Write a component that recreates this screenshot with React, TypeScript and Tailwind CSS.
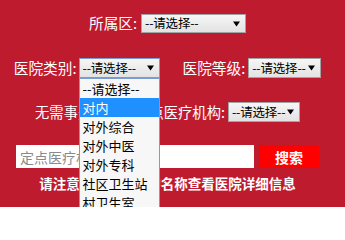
import React from "react";

const font = { fontFamily: '"Noto Sans CJK SC", "Noto Sans", sans-serif' };

function Caret() {
  return (
    <svg width="7" height="6" viewBox="0 0 7 6" className="shrink-0">
      <path d="M0 0.5 H7 L3.5 5.5 Z" fill="#000" />
    </svg>
  );
}

interface SelectProps {
  width: string;
  height: string;
  focused?: boolean;
}

function FakeSelect({ width, height, focused }: SelectProps) {
  return (
    <div
      className={`${width} ${height} flex items-center justify-between gap-[2px] overflow-hidden border pl-[3px] pr-[5px] bg-gradient-to-b from-[#f6f6f6] to-[#e3e3e3] ${
        focused ? "border-[#7b9bd3]" : "border-[#a3a3a3]"
      }`}
    >
      <span className="whitespace-nowrap text-[12.5px] leading-none tracking-[-0.2px] text-black">--请选择--</span>
      <Caret />
    </div>
  );
}

const options = ["--请选择--", "对内", "对外综合", "对外中医", "对外专科", "社区卫生站", "村卫生室"];

export default function App() {
  return (
    <div style={font} className="w-[345px] bg-white">
      <div className="bg-[#bf1b2f] w-[345px] h-[207px]">
        <div className="w-[335px] flex flex-col items-center pt-[14px]">
          {/* 所属区 */}
          <div className="flex items-center h-[19px]">
            <span className="whitespace-nowrap text-[14.67px] leading-none text-white">所属区:</span>
            <div className="ml-[4px]">
              <FakeSelect width="w-[105px]" height="h-[19px]" />
            </div>
          </div>

          {/* 医院类别 / 医院等级 */}
          <div className="flex items-center h-[20px] mt-[25px]">
            <span className="whitespace-nowrap text-[14.67px] leading-none text-white">医院类别:</span>
            <div className="relative ml-[2px] z-10">
              <FakeSelect width="w-[81px]" height="h-[20px]" focused />
              <div className="absolute left-0 top-full w-[81px] border border-[#7b9bd3] bg-[#f7f7f7]">
                {options.map((o, i) => (
                  <div
                    key={o}
                    className={`h-[19px] flex items-center pl-[3px] whitespace-nowrap text-[13px] leading-none ${
                      i === 1 ? "bg-[#1e90ff] text-white" : "text-black"
                    }`}
                  >
                    {o}
                  </div>
                ))}
              </div>
            </div>
            <span className="ml-[23px] whitespace-nowrap text-[14.67px] leading-none text-white">医院等级:</span>
            <div className="ml-[3px]">
              <FakeSelect width="w-[73px]" height="h-[20px]" />
            </div>
          </div>

          {/* 医疗机构 */}
          <div className="flex items-center h-[20px] mt-[24px]">
            <span className="whitespace-nowrap text-[14.3px] leading-none text-white">无需事先备案的定点医疗机构:</span>
            <div className="ml-[3px]">
              <FakeSelect width="w-[72px]" height="h-[20px]" />
            </div>
          </div>

          {/* 搜索 */}
          <div className="flex items-center gap-[5px] h-[23px] mt-[23px]">
            <div className="w-[238px] h-[23px] bg-white flex items-center pl-[4px]">
              <span className="whitespace-nowrap text-[14px] leading-none text-[#8a8a8a]">定点医疗机构名称</span>
            </div>
            <button
              type="button"
              className="w-[60px] h-[23px] bg-[#ff0000] text-white font-bold text-[14px] leading-none flex items-center justify-center"
            >
              搜索
            </button>
          </div>

          {/* 提示 */}
          <div className="h-[20px] mt-[6px] flex items-center">
            <span className="whitespace-nowrap text-[13.5px] font-bold leading-none text-white">
              请注意：点击医院的名称查看医院详细信息
            </span>
          </div>
        </div>
      </div>
    </div>
  );
}
